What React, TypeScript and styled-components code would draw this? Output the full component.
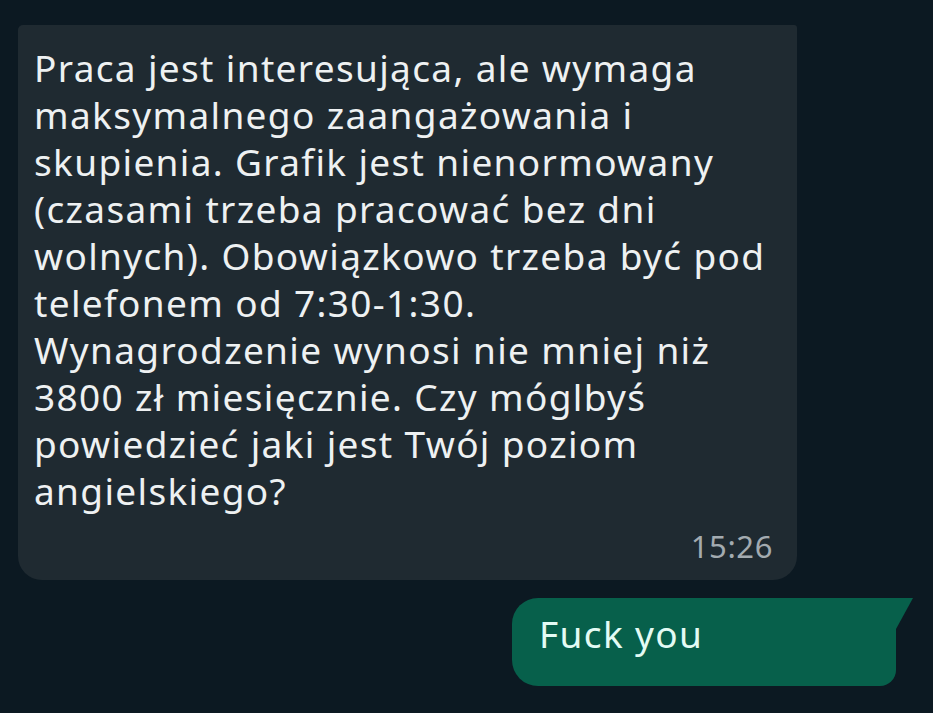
import styled, { createGlobalStyle } from 'styled-components';

const GlobalStyle = createGlobalStyle`
  html, body {
    margin: 0;
    padding: 0;
    background: #0c1922;
  }
  body {
    font-family: 'Noto Sans', 'Open Sans', sans-serif;
  }
`;

const Chat = styled.div`
  width: 933px;
  height: 713px;
  box-sizing: border-box;
  padding: 25px 0 0 18px;
  display: flex;
  flex-direction: column;
  background: #0c1922;
  overflow: hidden;
`;

const Incoming = styled.div`
  width: 779px;
  box-sizing: border-box;
  height: 555px;
  padding: 19px 24px 0 16px;
  background: #1f2a31;
  border-radius: 5px 3px 24px 24px;
  display: flex;
  flex-direction: column;
`;

const MessageText = styled.div`
  font-size: 37px;
  line-height: 47px;
  color: #eef1f2;
  letter-spacing: 1.35px;
  white-space: nowrap;
`;

const Time = styled.div`
  align-self: flex-end;
  margin-top: 14px;
  font-size: 31px;
  line-height: 36px;
  letter-spacing: 0.6px;
  color: #a3abb0;
`;

const OutgoingRow = styled.div`
  display: flex;
  justify-content: flex-end;
  padding-right: 37px;
  margin-top: 18px;
`;

const Outgoing = styled.div`
  position: relative;
  width: 384px;
  height: 88px;
  box-sizing: border-box;
  padding: 13px 0 0 27px;
  background: #07604b;
  border-radius: 26px 0 16px 26px;

  &::after {
    content: '';
    position: absolute;
    top: 0;
    right: -17px;
    width: 17px;
    height: 31px;
    background: #07604b;
    clip-path: polygon(0 0, 100% 0, 0 100%);
  }
`;

const OutgoingText = styled.div`
  font-size: 37px;
  line-height: 45px;
  letter-spacing: 1.35px;
  color: #e3fbf4;
`;

export default function App() {
  return (
    <>
      <GlobalStyle />
      <Chat>
        <Incoming>
          <MessageText>
            Praca jest interesująca, ale wymaga
            <br />
            maksymalnego zaangażowania i
            <br />
            skupienia. Grafik jest nienormowany
            <br />
            (czasami trzeba pracować bez dni
            <br />
            wolnych). Obowiązkowo trzeba być pod
            <br />
            telefonem od 7:30-1:30.
            <br />
            Wynagrodzenie wynosi nie mniej niż
            <br />
            3800 zł miesięcznie. Czy móglbyś
            <br />
            powiedzieć jaki jest Twój poziom
            <br />
            angielskiego?
          </MessageText>
          <Time>15:26</Time>
        </Incoming>
        <OutgoingRow>
          <Outgoing>
            <OutgoingText>Fuck you</OutgoingText>
          </Outgoing>
        </OutgoingRow>
      </Chat>
    </>
  );
}
